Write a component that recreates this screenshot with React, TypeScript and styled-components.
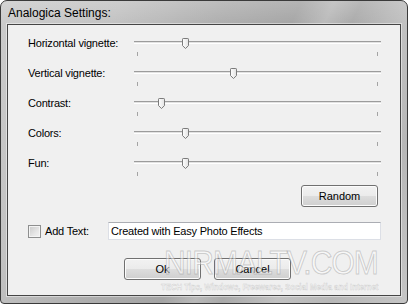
import React from 'react';
import styled, { createGlobalStyle } from 'styled-components';

const Global = createGlobalStyle`
  html, body { margin: 0; padding: 0; background: #ffffff; }
  body { font-family: "Liberation Sans", Arial, sans-serif; }
  * { box-sizing: border-box; }
`;

const Window = styled.div`
  position: relative;
  width: 408px;
  height: 304px;
  border: 1px solid #3a3a3a;
  border-radius: 7px 7px 4px 4px;
  background:
    linear-gradient(180deg, rgba(255, 255, 255, 0.18) 0px, rgba(255, 255, 255, 0) 26px),
    linear-gradient(115deg, #cbcbcb 0%, #c2c2c2 22%, #adadad 42%, #a4a4a4 55%, #b9b9b9 61%, #a9a9a9 66%, #c1c1c1 76%, #b7b7b7 86%, #c5c5c5 100%);
  display: flex;
  flex-direction: column;
  padding: 0 6px 7px 6px;
  overflow: hidden;
`;

const TitleBar = styled.div`
  height: 23px;
  display: flex;
  align-items: center;
  padding: 1px 0 0 1px;
  font-size: 12px;
  color: #000;
`;

const Client = styled.div`
  flex: 1;
  background: #f0f0f0;
  border: 1px solid #454545;
  box-shadow: 0 0 0 1px rgba(255, 255, 255, 0.45);
  padding: 3px 19px 0 20px;
  display: flex;
  flex-direction: column;
  font-size: 11px;
  color: #000;
`;

const SliderGrid = styled.div`
  display: grid;
  grid-template-columns: 106px 247px;
  grid-auto-rows: 30px;
`;

const Label = styled.div`
  line-height: 30px;
  letter-spacing: -0.2px;
  white-space: nowrap;
`;

const Slider = styled.div`
  position: relative;
  padding-top: 13px;
`;

const Track = styled.div`
  height: 3px;
  background: linear-gradient(180deg, #9c9c9c 0 1px, #e2e2e2 1px 2px, #ffffff 2px 3px);
`;

const Ticks = styled.div`
  margin-top: 8px;
  display: flex;
  justify-content: space-between;
  padding: 0 3px;
`;

const Tick = styled.div`
  width: 1px;
  height: 4px;
  background: #a4a4a4;
`;

const ThumbWrap = styled.div`
  position: absolute;
  top: 10px;
  width: 7px;
  height: 11px;
  display: flex;
`;

const Thumb: React.FC<{ value: number }> = ({ value }) => {
  const center = 3 + (value / 100) * 241;
  return (
    <ThumbWrap style={{ left: center - 3.5 }}>
      <svg width="7" height="11" viewBox="0 0 7 11">
        <defs>
          <linearGradient id="tg" x1="0" y1="0" x2="1" y2="0">
            <stop offset="0" stopColor="#ffffff" />
            <stop offset="1" stopColor="#e2e2e2" />
          </linearGradient>
        </defs>
        <path d="M0.5 1.2 Q0.5 0.5 1.2 0.5 H5.8 Q6.5 0.5 6.5 1.2 V7.6 L3.5 10.5 L0.5 7.6 Z" fill="url(#tg)" stroke="#7b7b7b" strokeWidth="1" />
      </svg>
    </ThumbWrap>
  );
};

const ButtonRow = styled.div<{ $align: 'end' | 'start'; $top: number; $pad: number }>`
  display: flex;
  justify-content: ${(p) => (p.$align === 'end' ? 'flex-end' : 'flex-start')};
  margin-top: ${(p) => p.$top}px;
  padding: ${(p) => (p.$align === 'end' ? `0 ${p.$pad}px 0 0` : `0 0 0 ${p.$pad}px`)};
  gap: 13px;
`;

const Button = styled.div`
  width: 77px;
  height: 22px;
  border: 1px solid #707070;
  border-radius: 3px;
  box-shadow: inset 0 0 0 1px #fcfcfc;
  background: linear-gradient(180deg, #f2f2f2 0%, #ebebeb 50%, #dddddd 51%, #cfcfcf 100%);
  display: flex;
  align-items: center;
  justify-content: center;
  font-size: 11px;
  color: #000;
`;

const AddTextRow = styled.div`
  display: flex;
  align-items: center;
  margin-top: 15px;
  height: 18px;
`;

const CheckBox = styled.div`
  width: 13px;
  height: 13px;
  border: 1px solid #8e8f8f;
  box-shadow: inset 0 0 0 1px #f4f4f4;
  background: linear-gradient(135deg, #c9c9c9 0%, #e6e6e6 60%, #f3f3f3 100%);
`;

const CheckLabel = styled.div`
  width: 63px;
  margin-left: 4px;
  letter-spacing: -0.2px;
`;

const TextBox = styled.div`
  width: 273px;
  height: 18px;
  background: #ffffff;
  border: 1px solid #dcdfe6;
  border-top-color: #abadb3;
  display: flex;
  align-items: center;
  padding-left: 2px;
  letter-spacing: -0.2px;
`;

const Watermark = styled.div`
  position: absolute;
  left: 163px;
  top: 244px;
  pointer-events: none;
  display: flex;
  flex-direction: column;
`;

const WatermarkBig = styled.div`
  font-size: 34px;
  line-height: 34px;
  color: rgba(255, 255, 255, 0.5);
  -webkit-text-stroke: 1px rgba(140, 140, 140, 0.4);
  transform: scaleX(0.88);
  transform-origin: left top;
  white-space: nowrap;
  letter-spacing: -1px;
`;

const WatermarkSmall = styled.div`
  margin-top: 3px;
  margin-left: -3px;
  font-size: 9px;
  font-weight: bold;
  color: rgba(255, 255, 255, 0.6);
  -webkit-text-stroke: 0.5px rgba(150, 150, 150, 0.4);
  transform: scaleX(0.86);
  transform-origin: left top;
  white-space: nowrap;
`;

const sliders = [
  { label: 'Horizontal vignette:', value: 20 },
  { label: 'Vertical vignette:', value: 40 },
  { label: 'Contrast:', value: 10 },
  { label: 'Colors:', value: 20 },
  { label: 'Fun:', value: 20 },
];

export default function App() {
  return (
    <>
      <Global />
      <Window>
        <TitleBar>Analogica Settings:</TitleBar>
        <Client>
          <SliderGrid>
            {sliders.map((s) => (
              <React.Fragment key={s.label}>
                <Label>{s.label}</Label>
                <Slider>
                  <Track />
                  <Ticks>
                    <Tick />
                    <Tick />
                  </Ticks>
                  <Thumb value={s.value} />
                </Slider>
              </React.Fragment>
            ))}
          </SliderGrid>
          <ButtonRow $align="end" $top={7} $pad={3}>
            <Button>Random</Button>
          </ButtonRow>
          <AddTextRow>
            <CheckBox />
            <CheckLabel>Add Text:</CheckLabel>
            <TextBox>Created with Easy Photo Effects</TextBox>
          </AddTextRow>
          <ButtonRow $align="start" $top={18} $pad={96}>
            <Button>Ok</Button>
            <Button>Cancel</Button>
          </ButtonRow>
        </Client>
        <Watermark>
          <WatermarkBig>NIRMALTV.COM</WatermarkBig>
          <WatermarkSmall>TECH Tips, Windows, Freewares, Social Media and Internet</WatermarkSmall>
        </Watermark>
      </Window>
    </>
  );
}
